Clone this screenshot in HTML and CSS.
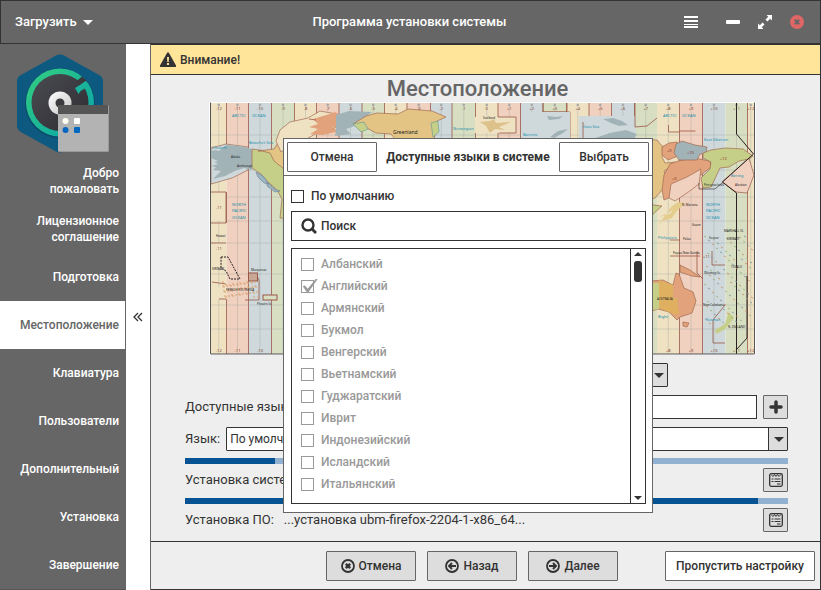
FILE: index.html
```html
<!DOCTYPE html>
<html lang="ru">
<head>
<meta charset="utf-8">
<meta name="viewport" content="width=device-width, initial-scale=1">
<title>Программа установки системы</title>
<link rel="stylesheet" href="styles.css">
</head>
<body>
<div class="app">
  <header class="titlebar">
    <button class="bar-button bar-menu" type="button">Загрузить <span class="caret"></span></button>
    <h1 class="bar-title">Программа установки системы</h1>
    <div class="bar-actions">
      <button class="bar-button" type="button" aria-label="Меню"><svg width="14" height="14" viewBox="0 0 14 14" fill="#fff"><path d="M0 1h14v2H0zM0 5h14v2H0zM0 9h14v1H0zM0 11h14v2H0z"/></svg></button>
      <button class="bar-button first-control" type="button" aria-label="Свернуть"><svg width="14" height="14" viewBox="0 0 14 14"><rect y="5" width="14" height="4" rx="1" fill="#fff"/></svg></button>
      <button class="bar-button" type="button" aria-label="Развернуть"><svg width="14" height="14" viewBox="0 0 14 14"><path d="M8.500 0H14v5.500l-1.800-1.800-2.800 2.800-1.900-1.900 2.800-2.800zM0 8.500l1.800 1.800 2.800-2.800 1.900 1.900-2.800 2.800L5.500 14H0z" fill="#fff"/></svg></button>
      <button class="bar-button" type="button" aria-label="Закрыть"><svg width="14" height="14" viewBox="0 0 14 14"><circle cx="7" cy="7" r="7" fill="#e06666"/><path d="M4.800 4.800l4.400 4.400M9.200 4.800l-4.400 4.400" stroke="#666" stroke-width="2.200"/></svg></button>
    </div>
  </header>

  <div class="body">
    <nav class="sidebar" aria-label="Шаги установки">
      <svg class="logo" width="126" height="113" viewBox="0 44 126 113">
        <defs>
          <linearGradient id="ring" x1="0" y1="0" x2="1" y2="1"><stop offset="0" stop-color="#35d07f"/><stop offset="1" stop-color="#05a0ab"/></linearGradient>
          <linearGradient id="disc" x1="0" y1="0" x2="1" y2="1"><stop offset="0" stop-color="#4b4b53"/><stop offset="1" stop-color="#2c2c30"/></linearGradient>
          <linearGradient id="hub" x1="0" y1="0" x2="1" y2="1"><stop offset="0" stop-color="#fff"/><stop offset="1" stop-color="#c4c4c4"/></linearGradient>
        </defs>
        <path d="M56 55.500q4-2 8 0l36 20q3 2 3 5v46q0 3-3 5l-36 20q-4 2-8 0l-36-20q-3-2-3-5v-46q0-3 3-5z" fill="#0e5980"/>
        <circle cx="60" cy="103.500" r="35" fill="#0b4b6b"/>
        <circle cx="60" cy="102.500" r="34" fill="url(#ring)"/>
        <circle cx="60" cy="102.500" r="28.500" fill="url(#disc)"/>
        <path d="M76 81.500l6-5 4.500 4-8 5.500z" fill="#3a3a3f"/>
        <path d="M75 88l10.500-6.500 3 5-8 4.500-2 3z" fill="#18b39a"/>
        <circle cx="60" cy="103" r="11.500" fill="url(#hub)"/><circle cx="60" cy="103" r="4.500" fill="#3a3a3f"/>
        <rect x="58" y="105" width="51" height="47" rx="1" fill="#999"/>
        <rect x="58" y="105" width="50" height="46" rx="1" fill="#b3b3b3"/><path d="M58 105h50v9H58z" fill="#555"/>
        <circle cx="65.500" cy="121" r="3" fill="#fffff4"/><rect x="74" y="118" width="6" height="6" rx="1" fill="#fff"/>
        <circle cx="65.500" cy="130" r="3" fill="#0667bf"/><rect x="74" y="127" width="6" height="6" rx="1" fill="#0667bf"/>
      </svg>
      <a class="step" href="#">Добро пожаловать</a>
      <a class="step" href="#">Лицензионное соглашение</a>
      <a class="step" href="#">Подготовка</a>
      <a class="step current" href="#" aria-current="step">Местоположение</a>
      <a class="step" href="#">Клавиатура</a>
      <a class="step" href="#">Пользователи</a>
      <a class="step" href="#">Дополнительный</a>
      <a class="step" href="#">Установка</a>
      <a class="step" href="#">Завершение</a>
    </nav>
    <button class="collapse" type="button" aria-label="Скрыть панель"><svg width="10" height="10" viewBox="0 0 10 10" fill="none" stroke="#333" stroke-width="1.300"><path d="M5 1L1 5l4 4M9 1L5 5l4 4"/></svg></button>

    <main class="main">
      <div class="alert" role="alert">
        <svg width="16" height="16" viewBox="0 0 16 16"><path d="M7 1q1-1.500 2 0l7 12.500q.5 1.500-1 1.500H1q-1.500 0-1-1.500z" fill="#333"/><path d="M7 5h2l-.3 5H7.300zM7 11h2v2H7z" fill="#ffe599"/></svg>
        <span>Внимание!</span>
      </div>
      <div class="content">
        <section class="place">
          <h2 class="page-title">Местоположение</h2>
          <svg class="map" viewBox="209 102 547 253" role="img" aria-label="Карта часовых поясов" id="map"></svg>
          <span class="picker zone"><select aria-label="Часовой пояс"><option></option></select></span>
        </section>
        <div class="row">
          <label for="langs">Доступные языки:</label>
          <input class="field" id="langs" type="text">
          <button class="icon-button" type="button" aria-label="Добавить"><svg width="14" height="14" viewBox="0 0 14 14"><path d="M7 2v10M2 7h10" stroke="#333" stroke-width="3.500" stroke-linecap="round"/></svg></button>
        </div>
        <div class="row">
          <label for="lang">Язык:</label>
          <span class="picker"><select id="lang"><option>По умолчанию</option></select></span>
        </div>
        <div class="progress"><div class="progress-fill" style="width:15%"></div></div>
        <div class="row status">
          <span>Установка системы:</span>
          <button class="icon-button log" type="button" aria-label="Журнал установки системы"><svg width="14" height="14" viewBox="0 0 14 14" fill="none" stroke="#333"><rect x=".7" y=".7" width="12.600" height="12.600" rx="1.500" stroke-width="1.300"/><path d="M2 1.500l2 2 1.500-2 1.500 2 1.500-2 1.500 2 2-2"/><path d="M2.500 6h2M5.500 6h6M2.500 8.500h2M5.500 8.500h6M8 11h3.500" stroke-width="1.200"/></svg></button>
        </div>
        <div class="progress"><div class="progress-fill" style="width:95%"></div></div>
        <div class="row status">
          <span>Установка ПО:</span><span>...установка ubm-firefox-2204-1-x86_64...</span>
          <button class="icon-button log" type="button" aria-label="Журнал установки ПО"><svg width="14" height="14" viewBox="0 0 14 14" fill="none" stroke="#333"><rect x=".7" y=".7" width="12.600" height="12.600" rx="1.500" stroke-width="1.300"/><path d="M2 1.500l2 2 1.500-2 1.500 2 1.500-2 1.500 2 2-2"/><path d="M2.500 6h2M5.500 6h6M2.500 8.500h2M5.500 8.500h6M8 11h3.500" stroke-width="1.200"/></svg></button>
        </div>
      </div>
      <footer class="footer">
        <div class="nav-buttons">
          <button class="button" type="button"><svg width="14" height="14" viewBox="0 0 14 14" fill="none" stroke="#333"><circle cx="7" cy="7" r="6" stroke-width="1.800"/><path d="M4.800 4.800l4.400 4.400M9.200 4.800l-4.400 4.400" stroke-width="2.400"/></svg>Отмена</button>
          <button class="button" type="button"><svg width="14" height="14" viewBox="0 0 14 14" fill="none" stroke="#333"><circle cx="7" cy="7" r="6" stroke-width="1.800"/><path d="M11 7H4M7 4L4 7l3 3" stroke-width="1.900"/></svg>Назад</button>
          <button class="button" type="button"><svg width="14" height="14" viewBox="0 0 14 14" fill="none" stroke="#333"><circle cx="7" cy="7" r="6" stroke-width="1.800"/><path d="M3 7h7M7 4l3 3-3 3" stroke-width="1.900"/></svg>Далее</button>
        </div>
        <button class="button plain skip" type="button">Пропустить настройку</button>
      </footer>

      <section class="dialog" role="dialog" aria-labelledby="dialog-title">
        <header class="dialog-head">
          <button class="button plain" type="button">Отмена</button>
          <h3 class="dialog-title" id="dialog-title">Доступные языки в системе</h3>
          <button class="button plain" type="button">Выбрать</button>
        </header>
        <div class="dialog-body">
          <label class="check"><input type="checkbox"> По умолчанию</label>
          <div class="search">
            <svg width="16" height="16" viewBox="0 0 16 16" fill="none" stroke="#333"><circle cx="7" cy="7" r="5.500" stroke-width="2.400"/><path d="M11 11l4 4" stroke-width="2.800"/></svg>
            <input type="text" placeholder="Поиск" aria-label="Поиск">
          </div>
          <div class="list">
            <div class="list-items">
              <label class="check"><input type="checkbox" disabled> Албанский</label>
              <label class="check"><input type="checkbox" disabled checked> Английский</label>
              <label class="check"><input type="checkbox" disabled> Армянский</label>
              <label class="check"><input type="checkbox" disabled> Букмол</label>
              <label class="check"><input type="checkbox" disabled> Венгерский</label>
              <label class="check"><input type="checkbox" disabled> Вьетнамский</label>
              <label class="check"><input type="checkbox" disabled> Гуджаратский</label>
              <label class="check"><input type="checkbox" disabled> Иврит</label>
              <label class="check"><input type="checkbox" disabled> Индонезийский</label>
              <label class="check"><input type="checkbox" disabled> Исландский</label>
              <label class="check"><input type="checkbox" disabled> Итальянский</label>
            </div>
            <div class="scrollbar"><span class="arrow-up"></span><span class="thumb"></span><span class="arrow-down"></span></div>
          </div>
        </div>
      </section>
    </main>
  </div>
</div>
<script src="map.js"></script>
</body>
</html>
```
FILE: styles.css
```css
* { box-sizing: border-box; }

body {
  margin: 0;
  font-family: Roboto, "Noto Sans", sans-serif;
  font-size: 12px;
  line-height: 16px;
  font-weight: 500;
  color: #333;
}

button, input, select { font: inherit; color: inherit; }
button { cursor: pointer; }
svg { display: block; flex: none; }

.app {
  display: flex;
  flex-direction: column;
  min-height: 100vh;
}

/* Title bar */
.titlebar {
  display: grid;
  grid-template-columns: 1fr auto 1fr;
  align-items: center;
  height: 44px;
  padding: 0 16px 0 14px;
  background: #666;
  border: 1px solid #333;
  color: #fff;
}
.bar-button {
  display: flex;
  align-items: center;
  gap: 6px;
  padding: 0;
  border: 0;
  background: none;
}
.bar-menu {
  justify-self: start;
  font-size: 13px;
}
.caret {
  border: 5px solid transparent;
  border-top-color: #fff;
  border-bottom-width: 0;
}
.bar-title {
  margin: 0;
  font-size: 13px;
  font-weight: 500;
}
.bar-actions {
  display: flex;
  justify-content: flex-end;
  gap: 18px;
}
.first-control { margin-left: 10px; }

.body {
  display: flex;
  flex: 1;
}

/* Steps */
.sidebar {
  flex: none;
  width: 126px;
  background: #666;
  border-bottom: 1px solid #555;
}
.step {
  display: flex;
  align-items: center;
  justify-content: flex-end;
  height: 48px;
  margin-right: 1px;
  padding: 0 6px 0 16px;
  color: #fff;
  text-align: right;
  text-decoration: none;
}
.current {
  background: #fff;
  color: #666;
}
.collapse {
  display: grid;
  place-items: center;
  flex: none;
  width: 25px;
  padding: 0;
  border: 0;
  border-right: 1px solid #666;
  background: #fff;
}

/* Main area */
.main {
  position: relative;
  display: flex;
  flex: 1;
  flex-direction: column;
  min-width: 0;
  background: #eee;
  border-right: 1px solid #333;
  border-bottom: 1px solid #333;
}
.alert {
  display: flex;
  align-items: center;
  gap: 4px;
  height: 31px;
  padding: 0 9px;
  background: #ffe599;
  border-top: 1px solid #333;
  border-bottom: 1px solid #333;
}
.content {
  display: flex;
  flex: 1;
  flex-direction: column;
  gap: 8px;
  padding: 0 32px 8px 34px;
  font-size: 13px;
  font-weight: 400;
}
.place {
  display: flex;
  flex-direction: column;
  align-items: center;
  padding-right: 8px;
}
.page-title {
  margin: 0;
  padding-right: 10px;
  font-size: 22px;
  line-height: 27px;
  font-weight: 500;
  color: #666;
}
.map {
  width: 547px;
  max-width: 100%;
  margin-bottom: 8px;
}
.row {
  display: flex;
  align-items: center;
  gap: 6px;
  height: 24px;
}
.field {
  flex: 1;
  min-width: 0;
  height: 24px;
  border: 1px solid #333;
  background: #fff;
}
.picker {
  position: relative;
  flex: 1;
  height: 24px;
}
.picker select {
  width: 100%;
  height: 24px;
  padding: 0 24px 0 3px;
  border: 1px solid #333;
  border-radius: 1px;
  background: linear-gradient(#333, #333) right 18px top / 1px 100% no-repeat, linear-gradient(#ddd, #ddd) right / 18px 100% no-repeat, #fff;
  font-size: 12px;
  appearance: none;
}
.picker::after {
  content: "";
  position: absolute;
  top: 10px;
  right: 4px;
  border: 5px solid transparent;
  border-top-color: #333;
  border-bottom-width: 0;
  pointer-events: none;
}
.zone {
  flex: none;
  width: 371px;
}
.icon-button {
  display: grid;
  place-items: center;
  width: 25px;
  height: 24px;
  padding: 0;
  border: 1px solid #666;
  border-radius: 1px;
  background: #ddd;
}
.log { margin-left: auto; }
.status {
  gap: 10px;
  margin: -4px 0 -1px;
}
.progress {
  height: 6px;
  margin-top: -1px;
  background: #91b1d0;
}
.progress-fill {
  height: 100%;
  background: #055393;
}

/* Buttons */
.button {
  display: flex;
  align-items: center;
  justify-content: center;
  gap: 4px;
  width: 90px;
  height: 30px;
  padding: 0;
  border: 1px solid #666;
  border-radius: 1px;
  background: #ddd;
}
.plain { background: #fff; }
.skip { width: 150px; }
.footer {
  display: flex;
  align-items: center;
  justify-content: flex-end;
  gap: 47px;
  height: 48px;
  padding-right: 5px;
  border-top: 1px solid #333;
}
.nav-buttons {
  display: flex;
  gap: 11px;
}

/* Language dialog */
.dialog {
  position: absolute;
  top: 94px;
  left: 132px;
  width: 370px;
  border: 1px solid #666;
  background: #fff;
}
.dialog-head {
  display: flex;
  align-items: center;
  justify-content: space-between;
  height: 37px;
  padding: 0 3px;
  border-bottom: 1px solid #666;
}
.dialog-title {
  margin: 0;
  font-size: 12px;
  font-weight: 700;
  white-space: nowrap;
}
.dialog-body {
  display: flex;
  flex-direction: column;
  gap: 7px;
  padding: 12px 6px 8px 7px;
}
.check {
  display: flex;
  align-items: center;
  gap: 7px;
}
.check input {
  flex: none;
  width: 13px;
  height: 13px;
  margin: 0;
  border: 1px solid #333;
  background: #fff;
  appearance: none;
}
.search {
  display: flex;
  align-items: center;
  gap: 4px;
  height: 30px;
  padding-left: 9px;
  border: 1px solid #333;
}
.search input {
  flex: 1;
  min-width: 0;
  padding: 0;
  border: 0;
  outline: 0;
}
.search input::placeholder {
  color: #333;
  opacity: 1;
}
.list {
  display: flex;
  height: 256px;
  border: 1px solid #333;
}
.list-items {
  flex: 1;
  padding: 4px 9px;
  color: #999;
}
.list-items .check { height: 22px; }
.list-items input { border-color: #999; }
.list-items input:checked { position: relative; }
.list-items input:checked::after {
  content: "";
  position: absolute;
  top: -2px;
  left: 0;
  width: 16px;
  height: 14px;
  background: #999;
  clip-path: polygon(5% 55%, 18% 50%, 36% 74%, 88% 0, 98% 4%, 40% 98%, 30% 98%);
}
.scrollbar {
  display: flex;
  flex-direction: column;
  align-items: center;
  width: 15px;
  padding: 3px 0;
  border-left: 1px solid #333;
}
.arrow-up, .arrow-down {
  border: 4px solid transparent;
}
.arrow-up {
  border-top-width: 0;
  border-bottom-color: #333;
}
.arrow-down {
  margin-top: auto;
  border-bottom-width: 0;
  border-top-color: #333;
}
.thumb {
  width: 8px;
  height: 21px;
  margin-top: 5px;
  border-radius: 3px;
  background: #333;
}

/* Time zone map */
.map .edge { fill: none; stroke: #995747; stroke-opacity: .8; }
.map .dateline { fill: none; stroke: #2b2222; }
.map .grid { fill: none; stroke: #8d9999; stroke-opacity: .3; }
.map .sea { fill: #238fae; font: 4px "Noto Sans", sans-serif; }
.map .place-name { fill: #222; font: 3px "Noto Sans", sans-serif; }
.map .greenland { font-size: 5px; }
.map .offset { fill: #84382b; font: 4px "Noto Sans", sans-serif; }
```
FILE: map.js
```js
// Draws the time zone strips, then the land masses over them.
const colours = ["#efe2c3", "#f0d0be", "#cfd9db", "#d8dec1"];
const edges = [211, 226.5, 248.5, 271.5, 294.5, 316.5, 339, 362, 384.5, 407, 430.5, 452, 475.5, 498, 520.5, 543, 566.5, 589, 611.5, 634.5, 657, 679.5, 702.5, 725.5, 747.5, 754];
let out = '<rect x="209" y="102" width="547" height="253" fill="#fff"/>';

for (let i = 0; i < edges.length - 1; i++) {
  const x = edges[i], w = edges[i + 1] - x, mid = x + w / 2;
  out += `<rect x="${x}" y="103" width="${w}" height="251" fill="${colours[i % 4]}"/>`;
  if (i === 1) out += '<path class="edge" d="M226.500 103v42M226.500 192v31M226.500 299v55"/>';
  else if (i && i !== 20 && i !== 23) out += `<path class="edge" d="M${x} 103v251"/>`;
  out += `<path class="grid" d="M${mid} 103v251"/>`;
  out += `<circle cx="${mid}" cy="105" r="1.300" fill="#a9a9a9"/>`;
  const label = i < 12 ? i - 12 : i > 12 ? "+" + (i - 12) : "0";
  out += `<text class="offset" text-anchor="middle" x="${mid}" y="110">${label}</text>`;
  // The lower scale is only labelled at the outer zones.
  if (mid < 283 || mid > 655) out += `<text class="offset" text-anchor="middle" x="${mid}" y="352">${label}</text>`;
}
for (const y of [135, 170, 197, 221, 243, 274, 305, 329]) out += `<path class="grid" d="M211 ${y}h543"/>`;

const shape = (d, fill, stroke = "#a06a50") => `<path d="${d}" fill="${fill}" stroke="${stroke}" stroke-width=".7"/>`;

// Left side: Alaska, Canada, Pacific islands
out += shape("M211 148l15-4 22 3v23l-16 8-21 6z", "#cfd9db");
out += shape("M211 151l4-1 4 1 7-6 14 1 12 3v21l-8-2-9 3-10 5-12 3 8-8-8-1 3-3-5-1 7-2-4-2 4-1-7-3z", "#a2b3b8", "none");
out += shape("M252 149l14 2 28-1v69l-14-1 2-19-5-9-9-8-7-8-9-6z", "#c6cf88");
out += shape("M258 151l16-2 9-14 9-10 7-4v48h-15l-10-8-4-8-8-2z", "#e3c484");
out += shape("M256 172l7 4 6 8-5-1-6-6zM267 182l8 7 5 2-5 1-8-6z", "#99b5c0", "#789");
out += shape("M276 141l4-11 10-8 18-4 12-7 22 4-7 13-15 3-15 9-14 5-10 7z", "#efe2c3");
out += shape("M313 119l23-7 6 13-10 3 8 3-17 4-13-1 8-5-9-2 9-3z", "#e2a27c", "none");
out += shape("M336 115l13-4 23 1-9 7-8 7-9 3 5 5-16 2 1-7z", "#a2b3b8", "none");
out += shape("M353 124l13-8 11-3 21 1 10-5 24 2 14 6-9 4-3 20-38-1-5-6-15-1-11-6z", "#e3c484");
out += shape("M431 123l7-2 1 11-6 5z", "#c6cf88", "#6d9f9a");
out += shape("M353 124l11-2 4 7-7 3z", "#c6cf88", "#6d9f9a");
out += '<path d="M211 193h15v28h-15zM211 243h15v26h-15zM218 299h9v-12h-9z" fill="#efe2c3"/>';
out += '<path class="edge" d="M211 192h15v31h-15M211 243h15M219 299h7M248 273l8 1 3 6v20h-14M316 120l-7-1M226 284l-14-2"/>';
out += '<path class="dateline" d="M221 257h7l12 22h-10l-4-8-5-3z" stroke-dasharray="2 1"/>';
out += '<rect x="248.500" y="273" width="9" height="8" fill="#c8a894" stroke="#995747"/><rect x="263" y="295" width="14" height="5" fill="#d8dec1" stroke="#995747"/>';

// Top centre: Svalbard, Arctic islands
out += '<path d="M475 117h41v16h-41z" fill="#efe2c3"/><path class="edge" d="M498 117h18v16h-17M543 103v9h24v-9M543 112h27v28"/>';
out += shape("M480 122l10-1 4-2 2 4 15-1-12 5 6 3-10-1-5 4-4-7z", "#dcc18a", "none");
out += shape("M521 112h49v26h-49z", "#cfd9db", "none");
out += shape("M550 137l8-6 10-2-5 4-9 5zM547 116l9 1 7-1-4 3-10 1z", "#a2b3b8", "none");
out += '<path d="M579 116h57v24h-57z" fill="#cfd9db"/><path class="edge" d="M635 103v24l12-1 10-8M583 122v18"/>';
out += shape("M595 138l15-5 16-3 11 4-3 5zM603 119l10-1 9 3 6 4-9 1-8-3z", "#a2b3b8", "none");

// Right side: Siberia, Far East, Japan, Australia
out += shape("M640 139l17 1 4 5 3 2-2 10 3 6 10-1-4 5-7 4 2 5-3 13-8 9-15 3z", "#e3c484");
out += shape("M662 147l7-4 8-1 4 8-3 6-10 4-6-5z", "#e2a27c");
out += shape("M664 175l6-11 8-3 16-3 16 3 1 6-10 8-10 2-12 7-5 1-1 11-9 4-2-10z", "#e2a27c");
out += shape("M676 144l6-3 13 4 12 2-1 6-6 1-3 6-18 0-5-7z", "#a2b3b8");
out += shape("M671 184l16-7 14-8-2 15-12 9-12 8-6-3z", "#f0d0be");
out += shape("M722 182l27-24 5 17-7 18-11-1z", "#f0d0be", "#995747");
out += shape("M703 153l8-3 14-2 18 1 10 7-4 3-10 2-10 6-9 1-9 19-8 1-2-10 9-9 1-7-8-4z", "#c6cf88");
out += shape("M637 190l9 1 7 14 9 1-9 8-4 11-12 4z", "#c6cf88");
out += shape("M671 207l7-5 7 1-9 9-4 6-10 3-5 6M660 217l10-3 3-4", "#e3cc8c", "none");
out += shape("M637 288l13-7 13-1 10 5 3-12 3 1 5 14 9 4 3 9-4 12-12 4-3 3-8-8-11-3-21 7z", "#e2a27c");
out += shape("M637 288l10-5 12 0v26l-13 2-9 7z", "#c6cf88", "none");
out += shape("M659 280l8 3 6 2v13h4l2 17-8-2-12-5z", "#deb060", "none");
out += shape("M683 322l6 1-2 4-4-1zM680 265l10 5 10 7-8-1-12-4z", "#e2a27c");
out += shape("M715 330l10-6 4-12 5 6-10 12-8 4z", "#c6cf88", "none");
out += '<path class="edge" d="M679.500 132h-11v-7M679.500 131h16M712 251v14h13M713 320l12-15M713 320v23h12M697 251v22l6 6M670 256h30M670 240h10"/>';
out += '<path class="dateline" d="M736.500 103v31l17 20-31 28 14 11v161M747 276v62l-10 11"/><path class="dateline" d="M699 183v6h16l7-6" stroke-opacity=".6"/>';

// Scattered island groups
for (let i = 0; i < 90; i++) {
  const x = 704 + (i * 37) % 48, y = 236 + (i * 23) % 88;
  out += `<path d="M${x} ${y}l2 1" stroke="${["#8fae76", "#70959d", "#c58b5f"][i % 3]}" stroke-width=".8"/>`;
}
for (let i = 0; i < 55; i++) {
  const x = 222 + (i * 29) % 36, y = 282 + (i * 17) % 16;
  out += `<path d="M${x} ${y}h2" stroke="#dda06f"/>`;
}

const labels = [
  ["sea", 232, 117, "ARCTIC"], ["sea", 252, 117, "OCEAN"], ["sea", 249, 144, "Beaufort Sea"],
  ["sea", 232, 206, "NORTH"], ["sea", 232, 212, "PACIFIC"], ["sea", 232, 219, "OCEAN"],
  ["sea", 663, 117, "ARCTIC"], ["sea", 682, 117, "OCEAN"], ["sea", 704, 141, "East Siberian"],
  ["sea", 706, 206, "NORTH"], ["sea", 706, 212, "PACIFIC"], ["sea", 706, 219, "OCEAN"],
  ["sea", 453, 130, "Norwegian"], ["sea", 523, 136, "Barents"], ["sea", 583, 128, "Kara Sea"],
  ["sea", 658, 239, "Philippine"], ["sea", 658, 318, "Bight"], ["sea", 706, 321, "Tasman"],
  ["sea", 731, 177, "Bering"], ["sea", 212, 149, "Chukchi"],
  ["place-name", 483, 119, "Svalbard"],
  ["place-name", 231, 158, "Alaska"], ["place-name", 237, 167, "Anchorage"], ["place-name", 216, 237, "Hawaii"],
  ["place-name", 212, 270, "KIRIBATI"], ["place-name", 226, 291, "FRENCH POLYNESIA"], ["place-name", 251, 271, "Marquesas"],
  ["place-name", 257, 305, "Pitcairn Is."], ["place-name", 682, 206, "N. Mariana"], ["place-name", 673, 254, "Papua New Guinea"],
  ["place-name", 724, 232, "MARSHALL IS."], ["place-name", 727, 240, "KIRIBATI"], ["place-name", 731, 268, "TUVALU"],
  ["place-name", 703, 306, "New Caledonia"], ["place-name", 728, 328, "N. ZEALAND"], ["place-name", 657, 300, "AUSTRALIA"],
  ["place-name", 704, 186, "Petropavlovsk"], ["place-name", 692, 226, "Guam"], ["place-name", 683, 240, "Palau"],
  ["place-name", 704, 274, "Solomon Is."], ["place-name", 735, 186, "Aleutian"], ["place-name", 709, 239, "Kosrae"],
  ["offset", 667, 152, "+9"], ["offset", 687, 154, "+10"], ["offset", 720, 160, "+12"], ["offset", 672, 180, "+9"],
  ["offset", 703, 258, "+11"], ["offset", 216, 209, "-11"], ["offset", 216, 250, "-11"]
];
for (const [kind, x, y, text] of labels) out += `<text class="${kind}" x="${x}" y="${y}">${text}</text>`;
out += '<text class="place-name greenland" x="393" y="134">Greenland</text>';
out += '<path d="M210.500 102.500v251.500h544v-251.500" fill="none" stroke="#555"/>';

document.getElementById("map").innerHTML = out;
```
